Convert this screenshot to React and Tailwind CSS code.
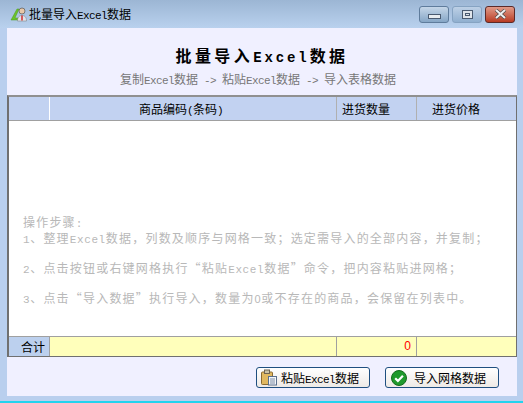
import React from "react";

// Latin runs squeezed to 6px per glyph, half the CJK width, like SimSun
const L = ({ children }) => (
  <span className="text-[11px] leading-none tracking-[-0.6px] font-['Liberation_Mono']">{children}</span>
);
// same thing for the instructions block, which is letter-spaced
const LS = ({ children }) => (
  <span className="text-[11px] leading-none tracking-[0.6px] font-['Liberation_Mono']">{children}</span>
);

const ClipboardIcon = () => (
  <svg width="18" height="17" viewBox="0 0 18 17">
    <rect x="1.5" y="3" width="11" height="12.5" rx="1" fill="#e0b860" stroke="#8a6a30" />
    <rect x="4.500" y="1" width="5" height="3.5" fill="#c9c2a8" stroke="#6d6350" />
    <rect x="8.500" y="7.5" width="8" height="8.5" fill="#f4f6fa" stroke="#5a6f8c" />
    <path d="M10 10h5M10 12h5M10 14h5" stroke="#7d8ca3" />
  </svg>
);

const CheckIcon = () => (
  <svg width="16" height="16" viewBox="0 0 16 16">
    <circle cx="8" cy="8" r="7.5" fill="#1f9a2c" stroke="#146b1e" />
    <path d="M4.2 8.2l2.7 2.7 5-5.2" fill="none" stroke="#fff" strokeWidth="2.2" />
  </svg>
);

const AppIcon = () => (
  <svg width="18" height="16" viewBox="0 0 18 16">
    <path d="M1 14L7 3h2l-4 9h5v2z" fill="#6cc22c" stroke="#4a9a1c" strokeWidth="0.5" />
    <circle cx="12" cy="5" r="3" fill="#e8c8a8" stroke="#555" strokeWidth="0.7" />
    <path d="M7.500 15c0-4 2-5.500 4.500-5.500s4.500 1.500 4.500 5.500z" fill="#dfe3ea" stroke="#777" strokeWidth="0.5" />
    <path d="M12 9.500v5" stroke="#d02020" strokeWidth="1.400" />
  </svg>
);

const WinButton = ({ className, children }) => (
  <div className={`w-[30px] h-[17px] rounded-[3px] border flex items-center justify-center ${className}`}>
    {children}
  </div>
);

const ActionButton = ({ icon, className, children }) => (
  <button className={`h-[21px] w-[114px] flex items-center rounded-[3px] border border-[#1f4f80] bg-gradient-to-b from-white to-[#eeeae6] text-black text-xs ${className}`}>
    {icon}
    {children}
  </button>
);

export default function App() {
  return (
    <div
      lang="zh-CN"
      className="w-[523px] h-[403px] flex flex-col overflow-hidden bg-[#b9cfee] text-xs font-normal"
      style={{ fontFamily: '"Noto Sans CJK SC", monospace' }}
    >
      <div className="h-[28px] shrink-0 flex items-center pl-[10px] pr-[8px] bg-gradient-to-b from-[#9cb6d4] to-[#b9d1ee]">
        <AppIcon />
        <span className="ml-[1px] text-black">批量导入<L>Excel</L>数据</span>
        <div className="ml-auto flex gap-[3px]">
          <WinButton className="border-[#5f7c9c] bg-gradient-to-b from-[#c5d6e8] to-[#86a6c6]">
            <div className="w-[13px] h-[5px] mt-[4px] bg-[#e8ecf0] border border-[#4a5a70]" />
          </WinButton>
          <WinButton className="border-[#86a3c2] bg-gradient-to-b from-[#bdd0e6] to-[#90afcf]">
            <div className="w-[11px] h-[9px] bg-[#dfe4ea] border border-[#4a5a70] flex items-center justify-center">
              <div className="w-[5px] h-[3px] border border-[#4a5a70]" />
            </div>
          </WinButton>
          <WinButton className="border-[#5c2a28] bg-gradient-to-b from-[#e09a88] to-[#b83a22]">
            <svg width="13" height="10" viewBox="0 0 13 10">
              <path d="M2 1l9 8M11 1l-9 8" stroke="#4a4a4a" strokeWidth="3.400" />
              <path d="M2 1l9 8M11 1l-9 8" stroke="#f0f0f0" strokeWidth="2" />
            </svg>
          </WinButton>
        </div>
      </div>

      <div className="flex-1 ml-[7px] mr-[6px] mb-[5px] flex flex-col bg-[#f0f0ff]">
        <div className="h-[67px] shrink-0 flex flex-col items-center pt-[18px]">
          <div className="text-base leading-[18px] font-bold text-black tracking-[3.400px]">
            批量导入<span className="text-[14px] leading-none font-['Liberation_Mono'] tracking-[2.900px]">Excel</span>数据
          </div>
          <div className="mt-[7px] mr-[8px] leading-[14px] text-[#777777]">
            复制<L>Excel</L>数据<L> -&gt; </L>粘贴<L>Excel</L>数据<L> -&gt; </L>导入表格数据
          </div>
        </div>

        <div className="h-[262px] shrink-0 flex flex-col bg-white border-l-2 border-t-2 border-r border-b border-l-[#707070] border-t-[#909090] border-r-[#707070] border-b-[#707070]">
          <div className="h-[24px] shrink-0 flex bg-[#c2d2f1] border-b border-[#a0a0a0] text-black leading-[23px]">
            <div className="w-[40px] ml-[1px] border-r border-white" />
            <div className="w-[287px] border-r border-[#b0b0b0] text-center pr-[24px]">
              商品编码<L>(</L>条码<L>)</L>
            </div>
            <div className="w-[80px] border-r border-[#b0b0b0] pl-[5px]">进货数量</div>
            <div className="flex-1 pl-[15px]">进货价格</div>
          </div>

          <div className="flex-1 flex flex-col justify-end pl-[14px] pb-[30px] text-[#b8b8b8] tracking-[1.200px] leading-4">
            <div>操作步骤<LS>:</LS></div>
            <div><LS>1</LS>、整理<LS>Excel</LS>数据，列数及顺序与网格一致；选定需导入的全部内容，并复制；</div>
            <div className="mt-[14px]"><LS>2</LS>、点击按钮或右键网格执行“粘贴<LS>Excel</LS>数据”命令，把内容粘贴进网格；</div>
            <div className="mt-[14px]"><LS>3</LS>、点击“导入数据”执行导入，数量为<span className="text-[11px] leading-none tracking-[0.6px] font-['Liberation_Sans']">0</span>或不存在的商品，会保留在列表中。</div>
          </div>

          <div className="h-[20px] shrink-0 flex bg-[#ffffbb] border-t border-[#a0a0a0] leading-[19px]">
            <div className="w-[41px] bg-[#bcd0ee] border-r border-[#a0a0a0] text-right pr-[4px] text-black">合计</div>
            <div className="w-[287px] border-r border-[#a0a0a0]" />
            <div className="w-[80px] border-r border-[#a0a0a0] text-right pr-[5px] text-[#ff0000] font-['Liberation_Sans']">0</div>
            <div className="flex-1" />
          </div>
        </div>

        <div className="flex-1 flex justify-end items-start pt-[10px] pr-[18px] gap-[15px]">
          <ActionButton className="pl-[3px]" icon={<ClipboardIcon />}>
            <span className="ml-[3px]">粘贴<L>Excel</L>数据</span>
          </ActionButton>
          <ActionButton className="pl-[5px]" icon={<CheckIcon />}>
            <span className="ml-[7px]">导入网格数据</span>
          </ActionButton>
        </div>
      </div>

      <div className="h-[2px] shrink-0 bg-[#22d3ee]" />
    </div>
  );
}
